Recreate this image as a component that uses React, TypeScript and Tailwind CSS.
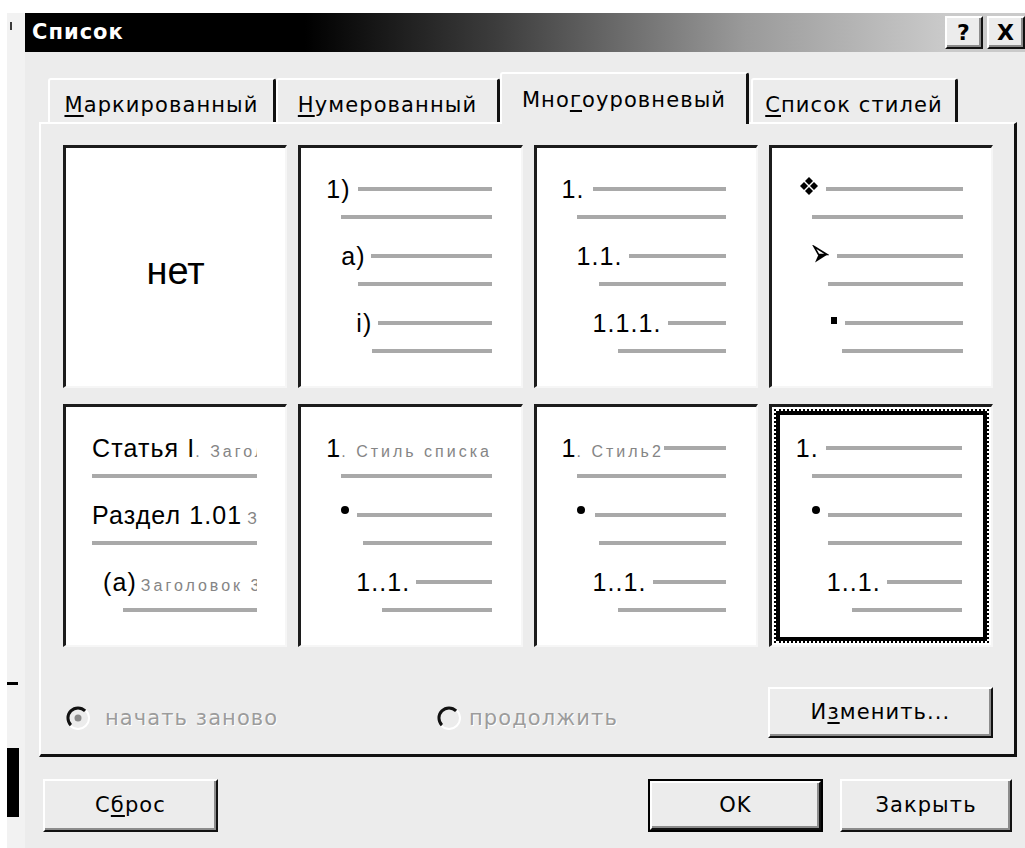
import React from "react";

type Kids = { className?: string; children?: React.ReactNode };

// gray bar standing in for a line of list text
function Ln({ className = "" }: { className?: string }) {
  return <span className={`h-1 flex-1 bg-[#a9a9a9] ${className}`} />;
}

function Row({ className = "", children }: Kids) {
  return <div className={`flex h-7 items-center ${className}`}>{children}</div>;
}

function Num({ className = "", children }: Kids) {
  return (
    <span className={`shrink-0 whitespace-nowrap font-['Liberation_Sans',Arial,sans-serif] text-[25px] leading-none text-black ${className}`}>
      {children}
    </span>
  );
}

function Faint({ className = "", children }: Kids) {
  return (
    <span className={`font-['Liberation_Sans',Arial,sans-serif] text-[16px] tracking-[3px] text-[#858585] ${className}`}>
      {children}
    </span>
  );
}

function Dot() {
  return <span className="mb-[10px] h-2 w-2 shrink-0 rounded-full bg-black" />;
}

function Cell({ children, className = "" }: Kids) {
  return (
    <div className={`flex flex-col overflow-hidden border-t-[3px] border-l-[3px] border-r-2 border-b-2 border-t-[#1c1c1c] border-l-[#1c1c1c] border-r-[#f6f6f6] border-b-[#f6f6f6] bg-white ${className}`}>
      {children}
    </div>
  );
}

function FourDiamonds() {
  return (
    <svg width="20" height="18" viewBox="0 0 20 18" className="shrink-0">
      <path d="M10 0L14 4L10 8L6 4Z M10 10L14 14L10 18L6 14Z M1 9L5 5L9 9L5 13Z M11 9L15 5L19 9L15 13Z" fill="#000" />
    </svg>
  );
}

function ArrowHead() {
  return (
    <svg width="17" height="19" viewBox="0 0 17 19" className="shrink-0">
      <path d="M2 1.5L15 9.5L6.5 9.5Z" fill="none" stroke="#000" strokeWidth="1.6" strokeLinejoin="miter" />
      <path d="M6.5 9.5L15.5 9.5L3 17.5Z" fill="#000" />
    </svg>
  );
}

function Radio({ checked = false }: { checked?: boolean }) {
  return (
    <svg width="24" height="24" viewBox="0 0 24 24" className="shrink-0">
      <path d="M4.2 19.8A11 11 0 0 0 19.8 4.2" stroke="#ffffff" strokeWidth="2" fill="none" />
      <path d="M19.1 4.9A10 10 0 0 0 4.9 19.1" stroke="#111" strokeWidth="3" fill="none" />
      <circle cx="12" cy="12" r="7" fill="#ececec" />
      {checked && <circle cx="12" cy="12" r="3.5" fill="#8a8a8a" />}
    </svg>
  );
}

function Button({ className = "", children }: Kids) {
  return (
    <div className={`flex items-center justify-center border-2 border-t-white border-l-white border-r-[#111] border-b-[#111] bg-[#ececec] text-black shadow-[inset_-2px_-2px_0_#8c8c8c] ${className}`}>
      {children}
    </div>
  );
}

function Tab({ className = "", children }: Kids) {
  return (
    <div className={`flex h-[44px] shrink-0 items-start justify-center rounded-t-[3px] border-t-2 border-l-2 border-r-[3px] border-t-white border-l-white border-r-[#111] pt-[10px] ${className}`}>
      {children}
    </div>
  );
}

export default function App() {
  return (
    <div className="flex h-[848px] w-[1025px] flex-col overflow-hidden bg-white font-['DejaVu_Sans',sans-serif] text-[21px] tracking-[1.1px] text-black">
      <div className="h-[13px] shrink-0" />
      <div className="flex min-h-0 flex-1">
        {/* sliver of the window behind */}
        <div className="flex w-[25px] shrink-0">
          <div className="w-[7px] bg-white" />
          <div className="flex w-[18px] flex-col bg-[#f2f2f2] pt-[9px]">
            <span className="ml-[3px] h-[8px] w-[2px] bg-[#3a3a3a]" />
            <span className="mt-[652px] h-[3px] w-[11px] bg-black" />
            <span className="mt-[63px] h-[69px] w-[12px] bg-black" />
          </div>
        </div>

        <div className="flex w-[1000px] flex-col bg-[#ececec]">
          {/* title bar */}
          <div className="flex h-[39px] shrink-0 items-center bg-[linear-gradient(90deg,#000_0%,#000_28%,#3c3c3c_47%,#9a9a9a_72%,#cacaca_92%)] pl-[7px]">
            <span className="font-bold tracking-[1px] text-white">Список</span>
            <div className="ml-auto flex gap-[4px]">
              <Button className="h-[33px] w-[38px] text-[22px] font-bold">?</Button>
              <Button className="h-[33px] w-[38px] text-[22px] font-bold">X</Button>
            </div>
          </div>

          <div className="flex flex-1 flex-col pl-[14px] pr-[8px] pt-[20px]">
            {/* tabs */}
            <div className="flex items-end pl-[9px]">
              <Tab className="w-[228px]">
                <span><u className="underline-offset-[3px]">М</u>аркированный</span>
              </Tab>
              <Tab className="w-[224px]">
                <span><u className="underline-offset-[3px]">Н</u>умерованный</span>
              </Tab>
              <div className="relative z-10 -mb-[2px] flex h-[52px] w-[249px] shrink-0 items-start justify-center rounded-t-[3px] border-t-2 border-l-2 border-r-[3px] border-t-white border-l-white border-r-[#111] bg-[#ececec] pt-[11px]">
                <span>Мно<u className="underline-offset-[3px]">г</u>оуровневый</span>
              </div>
              <Tab className="ml-[2px] w-[207px]">
                <span><u className="underline-offset-[3px]">С</u>писок стилей</span>
              </Tab>
            </div>

            {/* tab page */}
            <div className="border-t-2 border-l-2 border-r-[3px] border-b-[3px] border-t-white border-l-white border-r-[#111] border-b-[#111] pl-[22px] pr-[21px] pt-[21px] pb-[16px]">
              <div className="grid grid-cols-4 grid-rows-[243px_243px] gap-x-[11px] gap-y-[16px]">
                <Cell className="items-center justify-center pt-[8px]">
                  <span className="font-['Liberation_Sans',Arial,sans-serif] text-[38px] tracking-normal">нет</span>
                </Cell>

                <Cell>
                  <div className="pt-[27px] pr-[29px]">
                    <Row className="gap-[7px] pl-[25px]"><Num>1)</Num><Ln /></Row>
                    <Row className="pl-[40px]"><Ln /></Row>
                    <Row className="mt-[11px] gap-[5px] pl-[40px]"><Num>a)</Num><Ln /></Row>
                    <Row className="pl-[57px]"><Ln /></Row>
                    <Row className="mt-[11px] gap-[6px] pl-[55px]"><Num>i)</Num><Ln /></Row>
                    <Row className="pl-[71px]"><Ln /></Row>
                  </div>
                </Cell>

                <Cell>
                  <div className="pt-[27px] pr-[30px]">
                    <Row className="gap-[8px] pl-[25px]"><Num>1.</Num><Ln /></Row>
                    <Row className="pl-[40px]"><Ln /></Row>
                    <Row className="mt-[11px] gap-[6px] pl-[40px]"><Num>1.1.</Num><Ln /></Row>
                    <Row className="pl-[62px]"><Ln /></Row>
                    <Row className="mt-[11px] gap-[6px] pl-[56px]"><Num>1.1.1.</Num><Ln /></Row>
                    <Row className="pl-[81px]"><Ln /></Row>
                  </div>
                </Cell>

                <Cell>
                  <div className="pt-[27px] pr-[28px]">
                    <Row className="gap-[7px] pl-[27px]"><span className="mb-[6px] flex"><FourDiamonds /></span><Ln /></Row>
                    <Row className="pl-[40px]"><Ln /></Row>
                    <Row className="mt-[11px] gap-[8px] pl-[40px]"><span className="mb-[4px] flex"><ArrowHead /></span><Ln /></Row>
                    <Row className="pl-[56px]"><Ln /></Row>
                    <Row className="mt-[11px] gap-[8px] pl-[59px]"><span className="mb-[6px] h-[7px] w-[6px] shrink-0 bg-black" /><Ln /></Row>
                    <Row className="pl-[70px]"><Ln /></Row>
                  </div>
                </Cell>

                <Cell>
                  <div className="pt-[27px] pr-[28px]">
                    <Row className="overflow-hidden pl-[26px]">
                      <span className="shrink-0 whitespace-nowrap leading-none"><Num className="text-[24px]">Статья I</Num><Faint>. Заголовок 1</Faint></span>
                    </Row>
                    <Row className="pl-[26px]"><Ln /></Row>
                    <Row className="mt-[11px] overflow-hidden pl-[26px]">
                      <span className="shrink-0 whitespace-nowrap leading-none"><Num className="text-[24px]">Раздел 1.01</Num><Faint className="ml-[5px]">Заголовок 2</Faint></span>
                    </Row>
                    <Row className="pl-[26px]"><Ln /></Row>
                    <Row className="mt-[11px] overflow-hidden pl-[37px]">
                      <span className="shrink-0 whitespace-nowrap leading-none"><Num className="text-[24px]">(а)</Num><Faint className="ml-[4px]">Заголовок 3</Faint></span>
                    </Row>
                    <Row className="pl-[57px]"><Ln /></Row>
                  </div>
                </Cell>

                <Cell>
                  <div className="pt-[27px] pr-[29px]">
                    <Row className="overflow-hidden pl-[25px]">
                      <span className="shrink-0 whitespace-nowrap leading-none"><Num>1</Num><Faint>. Стиль списка</Faint></span>
                    </Row>
                    <Row className="pl-[40px]"><Ln /></Row>
                    <Row className="mt-[11px] gap-[8px] pl-[40px]"><Dot /><Ln /></Row>
                    <Row className="pl-[62px]"><Ln /></Row>
                    <Row className="mt-[11px] gap-[6px] pl-[55px]"><Num>1..1.</Num><Ln /></Row>
                    <Row className="pl-[81px]"><Ln /></Row>
                  </div>
                </Cell>

                <Cell>
                  <div className="pt-[27px] pr-[30px]">
                    <Row className="pl-[25px]">
                      <span className="shrink-0 whitespace-nowrap leading-none"><Num>1</Num><Faint>. Стиль2</Faint></span>
                      <Ln />
                    </Row>
                    <Row className="pl-[40px]"><Ln /></Row>
                    <Row className="mt-[11px] gap-[10px] pl-[40px]"><Dot /><Ln /></Row>
                    <Row className="pl-[62px]"><Ln /></Row>
                    <Row className="mt-[11px] gap-[6px] pl-[56px]"><Num>1..1.</Num><Ln /></Row>
                    <Row className="pl-[81px]"><Ln /></Row>
                  </div>
                </Cell>

                {/* selected preview */}
                <Cell>
                  <div className="m-[2px] flex flex-1 flex-col border-2 border-dotted border-black">
                    <div className="flex-1 border-4 border-black pt-[19px] pr-[21px]">
                      <Row className="gap-[7px] pl-[16px]"><Num>1.</Num><Ln /></Row>
                      <Row className="pl-[32px]"><Ln /></Row>
                      <Row className="mt-[11px] gap-[8px] pl-[32px]"><Dot /><Ln /></Row>
                      <Row className="pl-[48px]"><Ln /></Row>
                      <Row className="mt-[11px] gap-[6px] pl-[47px]"><Num>1..1.</Num><Ln /></Row>
                      <Row className="pl-[72px]"><Ln /></Row>
                    </div>
                  </div>
                </Cell>
              </div>

              {/* numbering options */}
              <div className="mt-[40px] flex h-[51px] items-end">
                <div className="mb-[4px] flex w-[374px] items-center gap-[15px] pl-[3px] text-[#9c9c9c] [text-shadow:1px_1px_0_#ffffff]">
                  <Radio checked />
                  <span>начать заново</span>
                </div>
                <div className="mb-[4px] flex items-center gap-[8px] text-[#9c9c9c] [text-shadow:1px_1px_0_#ffffff]">
                  <Radio />
                  <span>продолжить</span>
                </div>
                <Button className="ml-auto h-[51px] w-[225px]">
                  <span>И<u className="underline-offset-[3px]">з</u>менить...</span>
                </Button>
              </div>
            </div>

            {/* dialog buttons */}
            <div className="mt-[22px] flex items-start">
              <Button className="ml-[4px] h-[53px] w-[175px]">
                <span>С<u className="underline-offset-[3px]">б</u>рос</span>
              </Button>
              <div className="ml-auto border-2 border-black">
                <Button className="h-[49px] w-[171px]">OK</Button>
              </div>
              <Button className="ml-[17px] mr-[5px] h-[53px] w-[172px]">Закрыть</Button>
            </div>
          </div>
        </div>
      </div>
    </div>
  );
}
